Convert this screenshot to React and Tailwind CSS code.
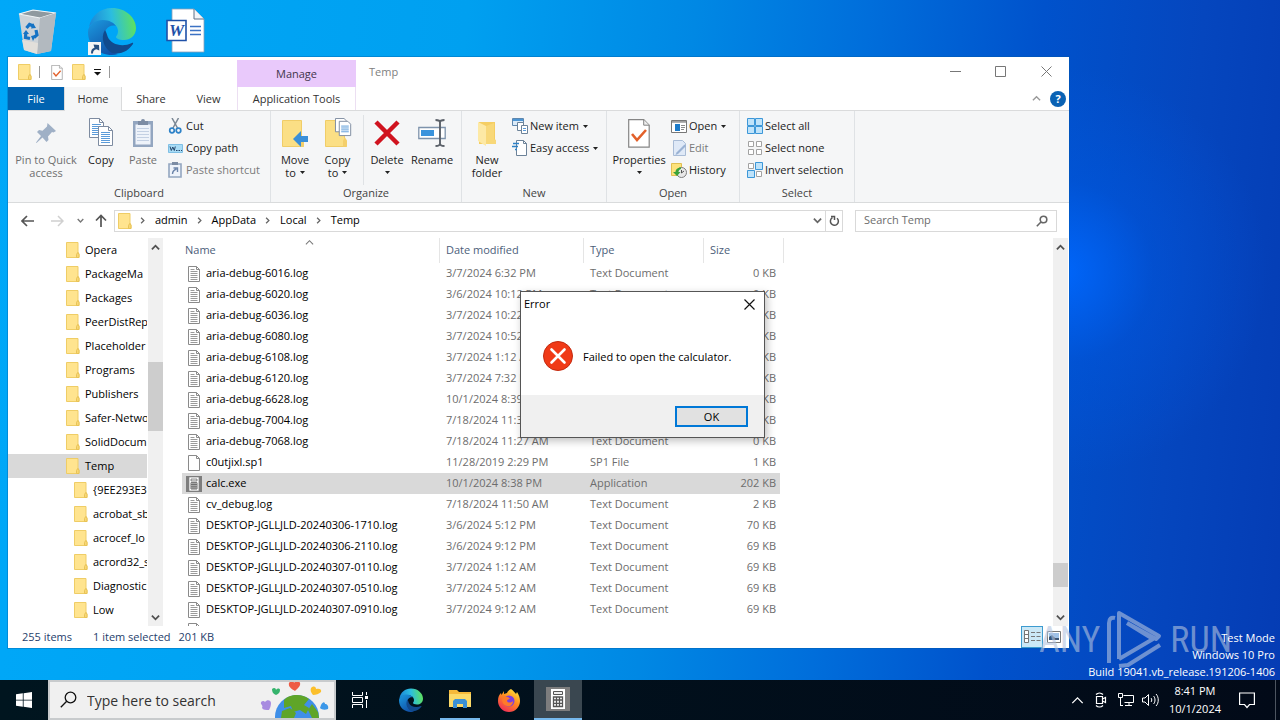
import clsx from 'clsx';

// ─────────────────────────────────────────────────────────────────────────────
// DATA
// ─────────────────────────────────────────────────────────────────────────────

const TREE = [
    { name: 'Opera' },
    { name: 'PackageMa' },
    { name: 'Packages' },
    { name: 'PeerDistRep' },
    { name: 'Placeholder' },
    { name: 'Programs' },
    { name: 'Publishers' },
    { name: 'Safer-Netwo' },
    { name: 'SolidDocum' },
    { name: 'Temp', selected: true },
    { name: '{9EE293E3-', child: true },
    { name: 'acrobat_sb', child: true },
    { name: 'acrocef_lo', child: true },
    { name: 'acrord32_s', child: true },
    { name: 'Diagnostic', child: true },
    { name: 'Low', child: true },
];

const FILES = [
    ['aria-debug-6016.log', '3/7/2024 6:32 PM', 'Text Document', '0 KB'],
    ['aria-debug-6020.log', '3/6/2024 10:12 PM', 'Text Document', '0 KB'],
    ['aria-debug-6036.log', '3/7/2024 10:22 PM', 'Text Document', '0 KB'],
    ['aria-debug-6080.log', '3/7/2024 10:52 PM', 'Text Document', '0 KB'],
    ['aria-debug-6108.log', '3/7/2024 1:12 AM', 'Text Document', '0 KB'],
    ['aria-debug-6120.log', '3/7/2024 7:32 PM', 'Text Document', '0 KB'],
    ['aria-debug-6628.log', '10/1/2024 8:39 PM', 'Text Document', '0 KB'],
    ['aria-debug-7004.log', '7/18/2024 11:31 AM', 'Text Document', '0 KB'],
    ['aria-debug-7068.log', '7/18/2024 11:27 AM', 'Text Document', '0 KB'],
    ['c0utjixl.sp1', '11/28/2019 2:29 PM', 'SP1 File', '1 KB'],
    ['calc.exe', '10/1/2024 8:38 PM', 'Application', '202 KB'],
    ['cv_debug.log', '7/18/2024 11:50 AM', 'Text Document', '2 KB'],
    ['DESKTOP-JGLLJLD-20240306-1710.log', '3/6/2024 5:12 PM', 'Text Document', '70 KB'],
    ['DESKTOP-JGLLJLD-20240306-2110.log', '3/6/2024 9:12 PM', 'Text Document', '69 KB'],
    ['DESKTOP-JGLLJLD-20240307-0110.log', '3/7/2024 1:12 AM', 'Text Document', '69 KB'],
    ['DESKTOP-JGLLJLD-20240307-0510.log', '3/7/2024 5:12 AM', 'Text Document', '69 KB'],
    ['DESKTOP-JGLLJLD-20240307-0910.log', '3/7/2024 9:12 AM', 'Text Document', '69 KB'],
    ['', '', '', ''],
];

// ─────────────────────────────────────────────────────────────────────────────
// SMALL ICONS
// ─────────────────────────────────────────────────────────────────────────────

const Folder = () => (
    <svg width="14" height="16" viewBox="0 0 14 16" className="shrink-0">
        <path d="M.5.5h11.500v9.500l1 2v3.500H.5z" fill="#ffe48f" stroke="#efcd66" />
        <path d="M10.500 15.500v-3l1.200-2 1.300 2v3z" fill="#f8d775" stroke="#e8c356" />
    </svg>
)

const Chevron = ({ dir = 'down', size = 9, color = '#505050', weight = 2 }) => (
    <svg width={size} height={size} viewBox="0 0 10 10" fill="none" stroke={color} strokeWidth={weight} className="shrink-0">
        {dir === 'down' && <path d="M1 3l4 4 4-4" />}
        {dir === 'up' && <path d="M1 7l4-4 4 4" />}
        {dir === 'right' && <path d="M3 1l4 4-4 4" />}
    </svg>
)

const Caret = () => (
    <svg width="5" height="3" viewBox="0 0 5 3" className="inline-block shrink-0"><path d="M0 0h5L2.500 3z" fill="#222" /></svg>
)

const Page = ({ lines }) => (
    <svg width="12" height="16" viewBox="0 0 12 16" className="shrink-0">
        <path d="M.5.5h8l3 3v12H.5z" fill="#fff" stroke="#8a8a8a" />
        <path d="M8.500.5v3h3" fill="none" stroke="#8a8a8a" />
        {lines && <path d="M2.500 3.500h4M2.500 5.500h7M2.500 7.500h7M2.500 9.500h7M2.500 11.500h7M2.500 13.500h7" stroke="#9a9a9a" />}
    </svg>
)

const Calc = ({ size }) => (
    <svg width={size} height={size} viewBox="0 0 24 24" className="shrink-0">
        <path d="M0 0h24v24H0z" fill="#7d7d7d" />
        <path d="M5 2h14v20H5z" fill="#fff" />
        <path d="M7.500 4.500h9v3h-9z" fill="#eee" stroke="#555" />
        <path d="M7.500 10h9v9.500h-9zM10.500 10v9.500M13.500 10v9.500M7.500 13h9M7.500 16.300h9" fill="none" stroke="#555" strokeWidth="1.300" />
    </svg>
)

const CheckPage = ({ w, h }) => (
    <svg width={w} height={h} viewBox="0 0 22 29" className="shrink-0">
        <path d="M.7.7h15l5.500 5.500v22H.7z" fill="#fff" stroke="#858585" strokeWidth="1.200" />
        <path d="M15.700.7v5.500h5.500" fill="#eee" stroke="#858585" />
        <path d="M4 15l5 6 9-10" fill="none" stroke="#e2602a" strokeWidth="2.600" />
    </svg>
)

const Pin = () => (
    <svg width="22" height="22" viewBox="0 0 22 22">
        <path d="M12.500 1l8.500 8-2.500 1.500-1.500-.5-4 4.500.5 3.500-2 2-4-4.500L1.500 21 1 20.500 6 14 2 10l2-2 3.500.7L12 4.500z" fill="#9fb0c6" />
    </svg>
)

const Sheet = ({ x, y }) => (
    <g transform={`translate(${x} ${y})`}>
        <path d="M.5.5h10l4 4v15H.5z" fill="#fff" stroke="#7d8ba0" />
        <path d="M10.500.5v4h4" fill="none" stroke="#7d8ba0" />
        <path d="M3 6.500h9M3 8.500h9M3 10.500h9M3 12.500h9M3 14.500h9M3 16.500h9" stroke="#5b9bd9" />
    </g>
)

const CopyIcon = () => (
    <svg width="26" height="30" viewBox="0 0 26 30"><Sheet x={1} y={0} /><Sheet x={10} y={8} /></svg>
)

const PasteIcon = () => (
    <svg width="22" height="30" viewBox="0 0 22 30">
        <path d="M1 3h20v26H1z" fill="#93a6c0" />
        <path d="M3.500 6.500h15v20h-15z" fill="#eef3fa" />
        <path d="M5 10.500h12M5 13.500h12M5 16.500h12M5 19.500h12M5 22.500h12" stroke="#c3d0e3" />
        <path d="M6 3h3a2 2 0 014 0h3v4H6z" fill="#7c8ca4" />
    </svg>
)

const CutIcon = () => (
    <svg width="15" height="16" viewBox="0 0 15 16" fill="none">
        <path d="M4 0l5.500 10M10.500 0L5 10" stroke="#7a8794" strokeWidth="1.500" />
        <circle cx="4" cy="12.500" r="2.300" stroke="#2d82c8" strokeWidth="1.700" />
        <circle cx="10.500" cy="12.500" r="2.300" stroke="#2d82c8" strokeWidth="1.700" />
    </svg>
)

const PathIcon = () => (
    <svg width="15" height="9" viewBox="0 0 15 9">
        <path d="M.5.5h14v8H.5z" fill="#a8dcf6" stroke="#7fbfe4" />
        <path d="M2 2.500l1.300 4 1.500-3.500 1.500 3.500 1-4M8 6.500h1.500M10.500 6.500H12M13 6.500h1" fill="none" stroke="#24466b" />
    </svg>
)

const PasteShortcutIcon = () => (
    <svg width="14" height="16" viewBox="0 0 14 16" fill="none">
        <path d="M1 2h12v13H1z" fill="#eef3fa" stroke="#93a6c0" strokeWidth="1.600" />
        <path d="M4 0h6v3H4z" fill="#7c8ca4" />
        <path d="M4.500 12c0-3 1-4 4-5M5.500 6h4v4" stroke="#6d86ab" strokeWidth="1.400" />
    </svg>
)

const BigFolder = ({ children }) => (
    <svg width="28" height="30" viewBox="0 0 28 30">
        <path d="M1.500 2.500h19v18l2 3v5h-21z" fill="#fbdf85" stroke="#f0cd68" />
        <path d="M19 28.500v-6l2-3 2 3v6z" fill="#f4cf6b" />
        {children}
    </svg>
)

const DeleteIcon = () => (
    <svg width="26" height="30" viewBox="0 0 26 30"><path d="M2 4l22 22M24 4L2 26" stroke="#d0131f" strokeWidth="4.500" /></svg>
)

const RenameIcon = () => (
    <svg width="28" height="30" viewBox="0 0 28 30" fill="none">
        <path d="M.8 9.500h26.400v11H.8z" fill="#fff" stroke="#7e93ac" strokeWidth="1.300" />
        <path d="M3 12h13v6H3z" fill="#3a93dc" />
        <path d="M17.500 2c3 0 4.500.8 4.500 2.500C22 2.800 23.500 2 26.500 2M22 4v22M17.500 28c3 0 4.500-.8 4.500-2.500 0 1.700 1.500 2.500 4.500 2.500" stroke="#5b6169" strokeWidth="1.900" />
    </svg>
)

const NewFolderIcon = () => (
    <svg width="22" height="30" viewBox="0 0 22 30">
        <path d="M3 4h16v17l1 2v3H3z" fill="#f5ce63" />
        <path d="M2 4l8 4v20l-8-5z" fill="#fde9a5" />
        <path d="M10 8l8-3v16l2 2v3H10z" fill="#f8d879" />
    </svg>
)

const NewItemIcon = () => (
    <svg width="16" height="16" viewBox="0 0 16 16" fill="#fff">
        <path d="M.5.5h11v7H.5z" fill="#dcebf8" stroke="#5e87ae" /><path d="M1 1h10v2H1z" fill="#4c95d4" />
        <path d="M5.500 4.500h6v8h-6z" stroke="#6c8298" /><path d="M9.500 7.500h6v8h-6z" stroke="#6c8298" />
        <path d="M11 10.500h3M11 12.500h3" stroke="#5b9bd9" />
    </svg>
)

const EasyAccessIcon = () => (
    <svg width="16" height="16" viewBox="0 0 16 16">
        <path d="M4.500.5h7l3 3v12h-10z" fill="#fff" stroke="#6c8298" /><path d="M11.500.5v3h3" fill="none" stroke="#6c8298" />
        <path d="M1 3.500h6M0 6.500h6M3 9.500h2" stroke="#2d82c8" strokeWidth="1.400" />
    </svg>
)

const OpenIcon = () => (
    <svg width="16" height="13" viewBox="0 0 16 13">
        <path d="M.5.5h15v12H.5z" fill="#fff" stroke="#777" /><path d="M1 1h14v1.800H1z" fill="#a0a0a0" />
        <path d="M4 4h5v7H4z" fill="#1d7bc9" /><path d="M10 5.500h4M10 7.500h4M10 9.500h3" stroke="#8a8a8a" />
    </svg>
)

const EditIcon = () => (
    <svg width="16" height="16" viewBox="0 0 16 16">
        <path d="M2.500.5h9l3 3v12h-12z" fill="#dfe9f7" stroke="#a9bcd6" />
        <path d="M13.500 4.500l1.500 1.500-8 8-2.500 1 1-2.500z" fill="#9ab2d4" />
    </svg>
)

const HistoryIcon = () => (
    <svg width="16" height="16" viewBox="0 0 16 16">
        <path d="M.5 1.500h10v12H.5z" fill="#fde27c" stroke="#e0bf52" />
        <circle cx="10.500" cy="10.500" r="5" fill="#e8e8e8" stroke="#7c7c7c" />
        <path d="M10.500 8v3l2.500-2" fill="none" stroke="#555" />
        <path d="M10 5.500C6 5.500 4.500 8 4.500 10H2l4 4 3.500-4H7.500c0-1.500.8-2.500 2.500-3z" fill="#3aa23a" />
    </svg>
)

const SelectAllIcon = () => (
    <svg width="16" height="16" viewBox="0 0 16 16" fill="#bfe3fa" stroke="#3c97d8">
        <path d="M.5.5h7v7h-7zM8.500.5h7v7h-7zM.5 8.500h7v7h-7zM8.500 8.500h7v7h-7z" />
    </svg>
)

const SelectNoneIcon = () => (
    <svg width="16" height="16" viewBox="0 0 16 16" fill="#fff" stroke="#a2a2a2">
        <path d="M1.500 1.500h5v5h-5zM9.500 1.500h5v5h-5zM1.500 9.500h5v5h-5zM9.500 9.500h5v5h-5z" />
    </svg>
)

const InvertIcon = () => (
    <svg width="16" height="16" viewBox="0 0 16 16">
        <path d="M1.500 1.500h5v5h-5zM9.500 9.500h5v5h-5z" fill="#fff" stroke="#a2a2a2" />
        <path d="M8.500.5h7v7h-7zM.5 8.500h7v7h-7z" fill="#bfe3fa" stroke="#3c97d8" />
    </svg>
)

const EdgeLogo = ({ size }) => (
    <svg width={size} height={size} viewBox="0 0 48 48" className="shrink-0">
        <defs>
            <linearGradient id="edgeTop" x1="0" y1=".5" x2="1" y2=".4">
                <stop offset="0" stopColor="#1a86d8" /><stop offset=".5" stopColor="#2bbde0" /><stop offset="1" stopColor="#5fe35a" />
            </linearGradient>
            <linearGradient id="edgeMid" x1="0" y1="0" x2=".6" y2="1">
                <stop offset="0" stopColor="#1b9be0" /><stop offset="1" stopColor="#1152a8" />
            </linearGradient>
        </defs>
        <path d="M1 20C3 9 12 1 24 1c14 0 24 10 24 20 0 8-6 12-12 12-5 0-8-1.500-8-3 0-1 2-2 2-6 0-5-5-10-13-10C9 14 3 17 1 20z" fill="url(#edgeTop)" />
        <path d="M0 25c0-7 7-12 15-12 6 0 11 3 13 6-7-2-12 4-12 11 0 8 6 15 14 17-2 .6-4 1-6 1C10 48 0 38 0 25z" fill="url(#edgeMid)" />
        <path d="M17 23c-5 8-1 18 7 23 10 2 17-3 21-9 .6-1-.4-1.500-1.200-1-10 5-21 1-24-6-.8-2-1.400-5-2.800-7z" fill="#114a8d" />
    </svg>
)

// ─────────────────────────────────────────────────────────────────────────────
// DESKTOP ICONS
// ─────────────────────────────────────────────────────────────────────────────

const RecycleBin = () => (
    <svg width="40" height="46" viewBox="0 0 40 46">
        <path d="M1 5l14-4 23 3-5 38-14 3L6 41z" fill="#cdd3d8" />
        <path d="M1 5l14-4 23 3-16 5z" fill="#8f999f" stroke="#f2f5f7" strokeWidth="1.200" />
        <path d="M22 9l16-5-5 38-14 3z" fill="#b2b9bf" />
        <path d="M4 31l16 3-1 11-13-4z" fill="#e2dfda" />
        <g fill="none" stroke="#1673c4" strokeWidth="3.200">
            <path d="M8.500 19l3-3.500 4 1.500M18 21l1 5-3 2.500M12 29.500l-4.500-1 .3-4.500" />
        </g>
        <path d="M15 14l3 5-5 .5zM18 26l-3 6-2-5zM5 25l3-4 3 4z" fill="#1673c4" />
    </svg>
)

const WordDoc = () => (
    <svg width="40" height="46" viewBox="0 0 40 46">
        <path d="M6 1h22l10 10v33H6z" fill="#fff" stroke="#8ba0b8" strokeWidth=".8" />
        <path d="M28 1v10h10" fill="#f1f4f8" stroke="#5d6f85" />
        <path d="M24 18.500h11M24 22.500h11M24 26.500h11" stroke="#3c72c4" strokeWidth="1.400" />
        <path d="M1 12.500h19v20H1z" fill="#fff" stroke="#1f51a8" strokeWidth="1.600" />
        <text x="10.500" y="28" textAnchor="middle" fontFamily="Liberation Serif, serif" fontSize="17" fontStyle="italic" fontWeight="bold" fill="#1f51a8">W</text>
    </svg>
)

function DesktopIcons() {
    return (
        <div className="flex items-start gap-[30px] pt-[7px] pl-[18px]">
            <a href="#bin" aria-label="Recycle Bin" className="mt-0.5 block"><RecycleBin /></a>
            <a href="#edge" aria-label="Microsoft Edge" className="relative block">
                <EdgeLogo size={48} />
                <svg width="13" height="13" viewBox="0 0 13 13" className="absolute bottom-0 left-0">
                    <path d="M0 0h13v13H0z" fill="#f5f5f5" />
                    <path d="M3 11.500C3 8 4 6.500 6.500 5.800L5.500 2.500l5.500.5.3 5.500-2.800-1.200C6 8 5 9 5 11.500z" fill="#274f80" />
                </svg>
            </a>
            <a href="#word" aria-label="Word document" className="mt-px block"><WordDoc /></a>
        </div>
    )
}

// ─────────────────────────────────────────────────────────────────────────────
// RIBBON
// ─────────────────────────────────────────────────────────────────────────────

function BigButton({ icon, lines, caret, muted, width }) {
    return (
        <button className={clsx('flex flex-col items-center pt-0.5 text-[11px] leading-[13px]', width, muted ? 'text-[#6f6f6f]' : 'text-[#222]')}>
            <span className="mb-1 flex h-8 items-center">{icon}</span>
            {lines.map((line, i) => (
                <span key={line} className="flex items-center gap-1 whitespace-nowrap">
                    {line}{caret && i === lines.length - 1 && lines.length > 1 && <Caret />}
                </span>
            ))}
            {caret && lines.length === 1 && <span className="flex h-[13px] items-center"><Caret /></span>}
        </button>
    )
}

function SmallButton({ icon, label, caret, muted }) {
    return (
        <button className={clsx('flex h-[22px] items-center text-[11px] whitespace-nowrap', muted ? 'text-[#7a7a7a]' : 'text-[#222]')}>
            <span className="flex w-[18px] items-center">{icon}</span>
            <span className="pr-1">{label}</span>
            {caret && <Caret />}
        </button>
    )
}

function Group({ label, width, children }) {
    return (
        <section className={clsx('flex shrink-0 flex-col border-r border-[#dfe2e5]', width)} aria-label={label}>
            <div className="flex h-[74px] items-start pt-1">{children}</div>
            <div className="text-center text-[11px] leading-4 text-[#444]">{label}</div>
        </section>
    )
}

function Ribbon() {
    return (
        <div className="flex h-[92px] shrink-0 border-b border-[#d9dbdc] bg-[#f5f6f7]">
            <Group label="Clipboard" width="w-[263px]">
                <BigButton icon={<Pin />} lines={['Pin to Quick', 'access']} muted width="w-[76px]" />
                <BigButton icon={<CopyIcon />} lines={['Copy']} width="w-[34px]" />
                <BigButton icon={<PasteIcon />} lines={['Paste']} muted width="w-[50px]" />
                <div>
                    <SmallButton icon={<CutIcon />} label="Cut" />
                    <SmallButton icon={<PathIcon />} label="Copy path" />
                    <SmallButton icon={<PasteShortcutIcon />} label="Paste shortcut" muted />
                </div>
            </Group>
            <Group label="Organize" width="w-[191px]">
                <BigButton icon={<BigFolder><path d="M27 18h-7v-5l-8 8 8 8v-5h7z" fill="#3a8fd8" /></BigFolder>} lines={['Move', 'to']} caret width="w-12" />
                <BigButton
                    icon={<BigFolder><g transform="translate(11 0) scale(.95)"><path d="M.5.5h9l3 3v11H.5z" fill="#fff" stroke="#7d8ba0" /><path d="M4.500 3.500h9l3 3v12h-12z" fill="#fff" stroke="#7d8ba0" /><path d="M6.500 8.500h8M6.500 10.500h8M6.500 12.500h8M6.500 14.500h8" stroke="#5b9bd9" /></g></BigFolder>}
                    lines={['Copy', 'to']} caret width="w-[37px]" />
                <div className="ml-[7px] w-px self-stretch bg-[#dfe2e5]" />
                <BigButton icon={<DeleteIcon />} lines={['Delete']} caret width="w-[46px]" />
                <BigButton icon={<RenameIcon />} lines={['Rename']} width="w-11" />
            </Group>
            <Group label="New" width="w-[145px]">
                <BigButton icon={<NewFolderIcon />} lines={['New', 'folder']} width="w-[50px]" />
                <div>
                    <SmallButton icon={<NewItemIcon />} label="New item" caret />
                    <SmallButton icon={<EasyAccessIcon />} label="Easy access" caret />
                </div>
            </Group>
            <Group label="Open" width="w-[133px]">
                <BigButton icon={<CheckPage w={22} h={29} />} lines={['Properties']} caret width="w-16" />
                <div>
                    <SmallButton icon={<OpenIcon />} label="Open" caret />
                    <SmallButton icon={<EditIcon />} label="Edit" muted />
                    <SmallButton icon={<HistoryIcon />} label="History" />
                </div>
            </Group>
            <Group label="Select" width="w-[115px]">
                <div className="pl-[7px]">
                    <SmallButton icon={<SelectAllIcon />} label="Select all" />
                    <SmallButton icon={<SelectNoneIcon />} label="Select none" />
                    <SmallButton icon={<InvertIcon />} label="Invert selection" />
                </div>
            </Group>
        </div>
    )
}

// ─────────────────────────────────────────────────────────────────────────────
// EXPLORER WINDOW
// ─────────────────────────────────────────────────────────────────────────────

function TitleBar() {
    return (
        <header className="shrink-0">
            <div className="flex h-[30px]">
                <div className="flex w-[229px] items-center pl-[10px]">
                    <Folder />
                    <span className="mx-[7px] h-3 w-px bg-[#999]" />
                    <span className="ml-[4px]"><CheckPage w={12} h={15} /></span>
                    <span className="ml-[9px] flex"><Folder /></span>
                    <button aria-label="Customize toolbar" className="ml-2">
                        <svg width="7" height="7" viewBox="0 0 7 7"><path d="M0 0h7v1H0zM0 3h7L3.500 6.500z" fill="#111" /></svg>
                    </button>
                    <span className="ml-2 h-3 w-px bg-[#999]" />
                </div>
                <div className="mt-[3px] w-[119px] bg-[#e9c9fb] text-center text-[11px] leading-[28px] text-[#43354b]">Manage</div>
                <h1 className="grow pl-[13px] text-[11px] leading-[30px] text-[#808080]">Temp</h1>
                <div className="flex pb-0.5 text-[#777]">
                    <button aria-label="Minimize" className="flex w-[45px] items-center justify-center">
                        <svg width="11" height="11" viewBox="0 0 11 11"><path d="M0 5.500h11" stroke="currentColor" /></svg>
                    </button>
                    <button aria-label="Maximize" className="flex w-[45px] items-center justify-center">
                        <svg width="11" height="11" viewBox="0 0 11 11"><path d="M.5.500h10v10H.5z" fill="none" stroke="currentColor" /></svg>
                    </button>
                    <button aria-label="Close" className="flex w-[46px] items-center justify-center">
                        <svg width="11" height="11" viewBox="0 0 11 11"><path d="M.5.500l10 10M10.500.5L.5 10.500" stroke="currentColor" /></svg>
                    </button>
                </div>
            </div>
            <nav className="flex h-6 border-b border-[#dadbdc] text-[11px] text-[#333]">
                <button className="w-14 bg-[#0063b1] pt-px text-white">File</button>
                <button className="-mb-px w-[58px] border-x border-[#dadbdc] bg-[#f5f6f7]">Home</button>
                <button className="w-[58px] pt-px">Share</button>
                <button className="w-[57px] pt-px">View</button>
                <button className="w-[119px] border-x border-[#ecdff2] pt-px">Application Tools</button>
                <div className="flex grow items-center justify-end gap-[9px] pr-[3px]">
                    <button aria-label="Collapse ribbon"><Chevron dir="up" color="#999" weight={1.5} /></button>
                    <button aria-label="Help" className="size-4 rounded-full bg-[#0a62b4] text-[11px] leading-4 font-bold text-white">?</button>
                </div>
            </nav>
        </header>
    )
}

function AddressBar() {
    return (
        <div className="flex h-[35px] shrink-0 items-center pr-3 pl-[13px]">
            <button aria-label="Back" className="w-[14px]">
                <svg width="13" height="12" viewBox="0 0 13 12" fill="none" stroke="#555" strokeWidth="1.700"><path d="M13 6H1.500M6 1L1 6l5 5" /></svg>
            </button>
            <button aria-label="Forward" className="ml-4 w-[14px]">
                <svg width="13" height="12" viewBox="0 0 13 12" fill="none" stroke="#d0d0d0" strokeWidth="1.500"><path d="M0 6h11.500M7 1l5 5-5 5" /></svg>
            </button>
            <button aria-label="Recent" className="ml-3"><Chevron size={7} color="#777" /></button>
            <button aria-label="Up" className="ml-[11px]">
                <svg width="12" height="13" viewBox="0 0 12 13" fill="none" stroke="#555" strokeWidth="1.700"><path d="M6 13V1.500M1 6.500l5-5 5 5" /></svg>
            </button>
            <div className="ml-[7px] flex h-[22px] grow items-center border border-[#d9d9d9] pl-[3px] text-[11px]">
                <Folder />
                {['admin', 'AppData', 'Local', 'Temp'].map((part) => (
                    <span key={part} className="flex items-center">
                        <span className="mr-[9px] ml-[7px] flex"><Chevron dir="right" size={7} color="#666" weight={1.8} /></span>
                        <button className="pr-px">{part}</button>
                    </span>
                ))}
                <span className="grow" />
                <button aria-label="Previous locations" className="mr-[3px]"><Chevron color="#666" /></button>
                <button aria-label="Refresh" className="flex h-full w-[17px] items-center justify-center border-l border-[#d9d9d9]">
                    <svg width="11" height="12" viewBox="0 0 11 12" fill="none" stroke="#555" strokeWidth="1.500"><path d="M8 3.200a4 4 0 11-4.500-.5M2 1.500h3.500V5" /></svg>
                </button>
            </div>
            <label className="ml-3 flex h-[22px] w-[202px] items-center border border-[#d9d9d9] px-2">
                <input aria-label="Search Temp" placeholder="Search Temp" className="min-w-0 grow bg-transparent text-[11px] outline-none placeholder:text-[#6d6d6d]" />
                <svg width="12" height="12" viewBox="0 0 12 12" fill="none" stroke="#666" strokeWidth="1.600"><circle cx="7.500" cy="4.500" r="3.300" /><path d="M5 7L.8 11.200" /></svg>
            </label>
        </div>
    )
}

function ScrollBar({ lead, thumb }) {
    return (
        <div className="flex w-[15px] shrink-0 flex-col items-center bg-[#f0f0f0]">
            <span className="flex h-[18px] items-center"><Chevron dir="up" /></span>
            <span className={lead} />
            <span className={clsx('w-full bg-[#cdcdcd]', thumb)} />
            <span className="grow" />
            <span className="flex h-[18px] items-center"><Chevron /></span>
        </div>
    )
}

function Tree() {
    return (
        <ul className="w-[139px] shrink-0 overflow-hidden text-[11px]">
            {TREE.map(({ name, child, selected }) => (
                <li key={name} className={clsx('flex h-6 items-center gap-[5px] whitespace-nowrap', child ? 'pl-[66px]' : 'pl-[58px]', selected && 'bg-[#d9d9d9]')}>
                    <Folder />{name}
                </li>
            ))}
        </ul>
    )
}

function FileTable() {
    return (
        <table className="w-[602px] shrink-0 table-fixed border-separate border-spacing-0 self-start text-left text-[11px]">
            <colgroup>
                <col className="w-[258px]" /><col className="w-36" /><col className="w-[120px]" /><col className="w-[76px]" /><col className="w-1" />
            </colgroup>
            <thead>
                <tr className="h-[25px] text-[#4c607a]">
                    <th className="border-r border-[#e5e5e5] p-0 pl-[3px] font-normal">
                        <span className="flex items-center justify-between">
                            Name
                            <span className="mr-[125px] -mt-4"><Chevron dir="up" color="#777" weight={1.2} /></span>
                        </span>
                    </th>
                    <th className="border-r border-[#e5e5e5] p-0 pl-1.5 font-normal">Date modified</th>
                    <th className="border-r border-[#e5e5e5] p-0 pl-1.5 font-normal">Type</th>
                    <th className="p-0 pl-1.5 font-normal">Size</th>
                    <th className="border-r border-[#e5e5e5] p-0" />
                </tr>
            </thead>
            <tbody>
                {FILES.map(([name, date, type, size]) => {
                    const cell = clsx('p-0', name === 'calc.exe' && 'bg-[#d9d9d9]')
                    return (
                        <tr key={name} className="h-[21px] text-[#6d6d6d]">
                            <td className={cell}>
                                <span className="flex items-center gap-1.5 pl-1.5 whitespace-nowrap text-black">
                                    {name === 'calc.exe'
                                        ? <span className="-mx-0.5 flex"><Calc size={16} /></span>
                                        : <Page lines={name !== 'c0utjixl.sp1'} />}
                                    {name}
                                </span>
                            </td>
                            <td className={clsx(cell, 'pl-1.5!')}>{date}</td>
                            <td className={clsx(cell, 'pl-1.5!')}>{type}</td>
                            <td className={clsx(cell, 'pr-1! text-right')}>{size}</td>
                            <td className="p-0" />
                        </tr>
                    )
                })}
            </tbody>
        </table>
    )
}

function StatusBar() {
    return (
        <footer className="flex h-[22px] shrink-0 items-center pl-[14px] text-[11px] text-[#26406b]">
            <span>255 items</span>
            <span className="ml-[21px]">1 item selected</span>
            <span className="ml-2 grow">201 KB</span>
            <button aria-label="Details view" className="flex h-[22px] w-[22px] items-center justify-center border border-[#3d9bd0] bg-[#cbe8f6]">
                <svg width="17" height="14" viewBox="0 0 17 14" fill="none" stroke="#777">
                    <path d="M.5.5h4v12h-4zM.5 4.500h4M.5 8.500h4" fill="#fff" /><path d="M7 2.500h4M12.500 2.500h4M7 6.500h4M12.500 6.500h4M7 10.500h4M12.500 10.500h4" />
                </svg>
            </button>
            <button aria-label="Large icons view" className="mr-[7px] ml-[3px] flex h-[22px] w-4 items-center justify-center">
                <svg width="14" height="12" viewBox="0 0 14 12"><path d="M.5.500h13v11H.5z" fill="#fff" stroke="#777" /><path d="M2 2h10v5H2z" fill="#9fc2e8" /><path d="M2 6l3-2 3 3h4v2H2z" fill="#3a5577" /></svg>
            </button>
        </footer>
    )
}

function Explorer() {
    return (
        <main className="absolute top-[57px] right-[211px] bottom-8 left-2 flex flex-col overflow-hidden bg-white shadow-[0_0_0_1px_rgba(0,90,160,0.35)]">
            <TitleBar />
            <Ribbon />
            <AddressBar />
            <div className="flex min-h-0 flex-1 overflow-hidden">
                <Tree />
                <div className="ml-px flex"><ScrollBar lead="h-[106px]" thumb="h-[69px]" /></div>
                <div className="ml-[19px] flex min-w-0 grow overflow-hidden"><FileTable /></div>
                <div className="mr-px flex"><ScrollBar lead="h-[307px]" thumb="h-6" /></div>
            </div>
            <StatusBar />
        </main>
    )
}

// ─────────────────────────────────────────────────────────────────────────────
// ERROR DIALOG
// ─────────────────────────────────────────────────────────────────────────────

function ErrorDialog() {
    return (
        <div role="alertdialog" aria-label="Error" className="absolute top-[291px] left-[520px] w-[245px] border border-[#555] bg-white text-[11px] text-black shadow-[2px_3px_8px_rgba(0,0,0,0.25)]">
            <div className="flex h-6 items-center justify-between pr-[9px] pl-[3px]">
                <span>Error</span>
                <button aria-label="Close">
                    <svg width="11" height="11" viewBox="0 0 11 11"><path d="M.5.500l10 10M10.500.5L.5 10.500" stroke="#111" strokeWidth="1.200" /></svg>
                </button>
            </div>
            <div className="flex h-[79px] items-center gap-[10px] pl-[22px]">
                <svg width="30" height="30" viewBox="0 0 30 30">
                    <circle cx="15" cy="15" r="14.500" fill="#f03a17" stroke="#c22a10" />
                    <path d="M8.500 8.500l13 13M21.500 8.500l-13 13" stroke="#fff" strokeWidth="2.600" strokeLinecap="round" />
                </svg>
                <p className="pt-1">Failed to open the calculator.</p>
            </div>
            <div className="flex h-[42px] items-center justify-end bg-[#f0f0f0] pr-4">
                <button className="h-[21px] w-[73px] border-2 border-[#0078d7] bg-[#e1e1e1] pt-px leading-4">OK</button>
            </div>
        </div>
    )
}

// ─────────────────────────────────────────────────────────────────────────────
// WATERMARKS
// ─────────────────────────────────────────────────────────────────────────────

const narrow = "font-['Roboto_Condensed','Liberation_Sans_Narrow','Roboto',sans-serif]"

function Watermarks() {
    return (
        <>
            <div aria-hidden="true" className={clsx('absolute right-12 bottom-[10px] flex items-center text-[36px] font-normal text-[#b4c3de]/60', narrow)}>
                <span>ANY</span>
                <svg width="56" height="60" viewBox="0 0 56 60" fill="none" stroke="currentColor" strokeWidth="4" strokeLinejoin="round" className="mx-[7px]">
                    <path d="M8 8C4 7 2 9 2 13v40M12 49V3l40 23-3 3L20 13M12 56l9-1 32-20M12 49l34-20-26-16" />
                </svg>
                <span>RUN</span>
            </div>
            <div className="absolute right-[5px] bottom-0 text-right text-[11px] leading-[17px] text-white">
                <p>Test Mode</p>
                <p>Windows 10 Pro</p>
                <p>Build 19041.vb_release.191206-1406</p>
            </div>
        </>
    )
}

// ─────────────────────────────────────────────────────────────────────────────
// TASKBAR
// ─────────────────────────────────────────────────────────────────────────────

const Earth = () => (
    <svg width="70" height="38" viewBox="0 0 70 38" className="shrink-0">
        <circle cx="37" cy="37" r="22" fill="#3f8fe8" />
        <path d="M24 20c5-6 18-7 25-1l-5 6 5 3-3 6-6-4-7 2-2-6-7 2zM22 31l8-3 6 5-2 5H21zM52 24l6 8 1 6h-7l-4-8z" fill="#5fa528" />
        <path d="M29 3c2-3 5-2 5 0 1-2 5-3 6 0 1 3-3 6-5 8-3-2-7-4-6-8z" fill="#ee5a44" />
        <path d="M51 8c3-3 5-1 5 1 3-1 6 0 5 3-2 2-5 3-8 3-2-2-3-5-2-7z" fill="#fbbf2c" />
        <path d="M12 9c2-2 4-1 4 1 1-2 4-2 4 0 0 3-2 4-4 5-3-1-4-3-4-6z" fill="#35b36c" />
        <path d="M1 24c-1-3 3-4 4-2 2-3 6-2 6 1s-1 5-2 7c-3 0-6 0-7-2 1-2 0-3-1-4z" fill="#a88be0" />
        <path d="M61 25c2-4 4-3 4-1 2 0 4 2 3 5-3 1-6 1-8-1z" fill="#3b97e8" />
    </svg>
)

const Firefox = () => (
    <svg width="24" height="24" viewBox="0 0 24 24">
        <defs>
            <linearGradient id="fox" x1=".8" y1="0" x2=".2" y2="1">
                <stop offset="0" stopColor="#ffe53b" /><stop offset=".45" stopColor="#ff8a1f" /><stop offset="1" stopColor="#f0265d" />
            </linearGradient>
        </defs>
        <path d="M14 1c3 2 4 4 5 5l1-2c2 3 3 6 3 9a11 11 0 01-22 0c0-4 1-6 3-8l.5 2L7 3v3l3-1c1-2 2-3 4-4z" fill="url(#fox)" />
        <circle cx="12" cy="13" r="5.500" fill="#7a3fe0" />
        <path d="M6 9c3-1 6 0 7 2-2 0-3 1-3 2 1 2 4 2 6 0 0 4-3 6-6 5-4-1-6-5-4-9z" fill="#ff7a2a" />
    </svg>
)

const ExplorerIcon = () => (
    <svg width="22" height="20" viewBox="0 0 22 20">
        <path d="M0 1h8l2 2h12v15H0z" fill="#f5b93a" /><path d="M0 5h22v13H0z" fill="#fbd968" />
        <path d="M4 19v-7l2-2h10l2 2v7h-4v-4H8v4z" fill="#3a90d5" />
    </svg>
)

function Taskbar() {
    return (
        <footer className="flex h-10 shrink-0 items-stretch bg-linear-to-r from-[#00151f] to-[#020a18] text-white">
            <button aria-label="Start" className="flex w-12 items-center justify-center">
                <svg width="16" height="16" viewBox="0 0 16 16" fill="#fff"><path d="M0 2.300L6.800 1.300v6.400H0zM7.600 1.200L16 0v7.700H7.600zM0 8.500h6.800v6.300L0 13.800zM7.600 8.500H16V16l-8.400-1.200z" /></svg>
            </button>
            <label className="flex w-[288px] items-end overflow-hidden border-2 border-[#c8cbcd] bg-[#f0f0f0] pl-[10px]">
                <svg width="17" height="17" viewBox="0 0 17 17" fill="none" stroke="#111" strokeWidth="1.300" className="mb-[10px] shrink-0"><circle cx="10.500" cy="6.500" r="5.300" /><path d="M6.700 10.300L.8 16.200" /></svg>
                <input aria-label="Type here to search" placeholder="Type here to search" className="h-full min-w-0 grow bg-transparent pl-[10px] text-[14px] outline-none placeholder:text-[#333]" />
                <span className="mr-1 flex"><Earth /></span>
            </label>
            <button aria-label="Task view" className="flex w-12 items-center justify-center">
                <svg width="17" height="16" viewBox="0 0 17 16" fill="none" stroke="#fff"><path d="M.5 0v3.500h10V0M.5 16v-3.500h10V16M.5 5.500h10v5H.5zM14.500 0v3M14.500 8v8" /><path d="M13 4h3v3h-3z" fill="#fff" stroke="none" /></svg>
            </button>
            <button aria-label="Edge" className="flex w-[54px] items-center justify-center"><EdgeLogo size={24} /></button>
            <button aria-label="File Explorer" className="mx-0.5 flex w-10 items-center justify-center border-b-2 border-[#76b9ed]"><ExplorerIcon /></button>
            <button aria-label="Firefox" className="flex w-[52px] items-center justify-center pl-0.5"><Firefox /></button>
            <button aria-label="Calculator" className="flex w-12 items-center justify-center border-b-2 border-[#76b9ed] bg-[#3a4750]"><Calc size={24} /></button>
            <div className="ml-auto flex items-center">
                <button aria-label="Show hidden icons" className="mr-[10px]"><Chevron dir="up" size={13} color="#fff" weight={1} /></button>
                <svg width="14" height="16" viewBox="0 0 14 16" fill="none" stroke="#fff" strokeWidth="1.200" className="mr-[10px]">
                    <path d="M2.500 4.500h6v7h-6zM8.500 7l3-1.500v5l-3-1.500M2 2.500C4 .5 7 .5 9 2.500M2 13.500c2 2 5 2 7 0" />
                </svg>
                <svg width="16" height="14" viewBox="0 0 16 14" fill="none" stroke="#fff" className="mr-2"><path d="M5.500 2.500h10v7h-9M.5.500h4v4h-4zM2.500 4.500v8M11 9.500v3M7 12.500h7M2 12.500h3" /></svg>
                <svg width="17" height="14" viewBox="0 0 17 14" fill="none" stroke="#fff" className="mr-[10px]"><path d="M.5 5h2.500l3.500-3.500v11L3 9H.5zM9 5c1 1 1 3 0 4M11.500 3c2 2 2 6 0 8M14 1c3 3 3 9 0 12" /></svg>
                <time className="text-center text-[11px] leading-[18px]">8:41 PM<br />10/1/2024</time>
                <button aria-label="Notifications" className="mr-5 ml-[18px]">
                    <svg width="16" height="17" viewBox="0 0 16 17" fill="none" stroke="#fff" strokeWidth="1.200"><path d="M.6 1h14.800v11.500H10.500L8 15.500l-2.500-3H.6z" /></svg>
                </button>
                <span className="mr-1 h-10 w-px bg-[#4d5560]" />
            </div>
        </footer>
    )
}

export default function App() {
    return (
        <div className="flex h-screen min-h-[720px] flex-col overflow-hidden bg-[#0078d7] font-['Open_Sans',sans-serif]">
            <div className="relative grow bg-[radial-gradient(circle_at_83%_40%,rgba(0,104,255,0.9)_0%,rgba(0,90,230,0.4)_8%,transparent_18%),linear-gradient(95deg,#00a8f8_0%,#00a0f0_35%,#0088e4_52%,#006edb_65%,#0052cc_78%,#0546be_90%,#053cb4_100%)]">
                <DesktopIcons />
                <Explorer />
                <ErrorDialog />
                <Watermarks />
            </div>
            <Taskbar />
        </div>
    )
}
